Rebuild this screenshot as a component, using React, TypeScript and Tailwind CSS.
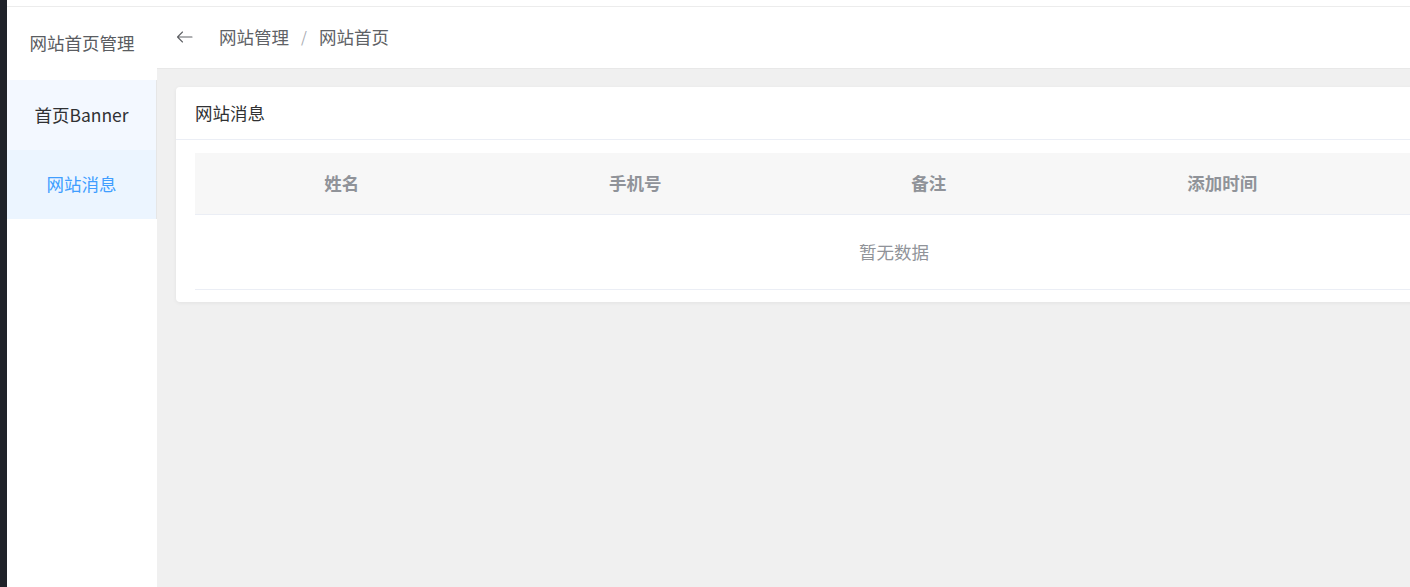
import React from 'react'

const columns = ['姓名', '手机号', '备注', '添加时间', '']

export default function App() {
  return (
    <div
      className="flex w-[1410px] h-[587px] overflow-hidden bg-[#f0f0f0] text-[17.5px]"
      style={{ fontFamily: '"Noto Sans CJK SC", "Noto Sans", sans-serif' }}
    >
      <div className="w-[7px] shrink-0 bg-[#1f2229]" />
      <div className="flex flex-col flex-1 min-w-0">
        <div className="h-[7px] shrink-0 bg-white border-b border-[#ececec]" />
        <div className="flex flex-1 min-h-0">
          {/* sidebar */}
          <aside className="w-[150px] shrink-0 bg-white flex flex-col">
            <div className="h-[73px] flex items-center justify-center text-[#5a5c61]">
              网站首页管理
            </div>
            <div className="h-[70px] flex items-center justify-center bg-[#f3f8ff] border-r border-[#e6e6e6] text-[#303133]">
              首页Banner
            </div>
            <div className="h-[69px] flex items-center justify-center bg-[#ecf5ff] border-r border-[#e6e6e6] text-[#409eff]">
              网站消息
            </div>
          </aside>

          {/* main */}
          <main className="flex flex-col flex-1 min-w-0 overflow-hidden">
            <div className="h-[62px] shrink-0 bg-white border-b border-[#e8e8e8] flex items-center pl-[19px] text-[#606266]">
              <svg width="17" height="12" viewBox="0 0 17 12" fill="none" className="mt-[-1px]">
                <path d="M16 6H1.5M6.5 1L1.5 6l5 5" stroke="#606266" strokeWidth="1.1" strokeLinecap="round" strokeLinejoin="round" />
              </svg>
              <span className="ml-[26px]">网站管理</span>
              <span className="mx-[12px] text-[#a8abb2] text-[15px]">/</span>
              <span>网站首页</span>
            </div>

            <div className="pl-[19px] pt-[18px]">
              <div className="w-[1436px] bg-white rounded-[4px] shadow-[0_1px_4px_rgba(0,0,0,0.06)]">
                <div className="h-[53px] flex items-center px-[19px] border-b border-[#ebeef5] text-[#303133]">
                  网站消息
                </div>
                <div className="px-[19px] pt-[13px] pb-[12px]">
                  <div className="w-[1398px]">
                    <div className="flex h-[62px] bg-[#f7f7f7] border-b border-[#ebeef5]">
                      {columns.map((c, i) => (
                        <div
                          key={i}
                          className={
                            'flex items-center justify-center font-bold text-[#909399] ' +
                            (i < 4 ? 'w-[293.5px]' : 'flex-1')
                          }
                        >
                          {c}
                        </div>
                      ))}
                    </div>
                    <div className="h-[75px] flex items-center justify-center border-b border-[#ebeef5] text-[#909399]">
                      暂无数据
                    </div>
                  </div>
                </div>
              </div>
            </div>
          </main>
        </div>
      </div>
    </div>
  )
}
